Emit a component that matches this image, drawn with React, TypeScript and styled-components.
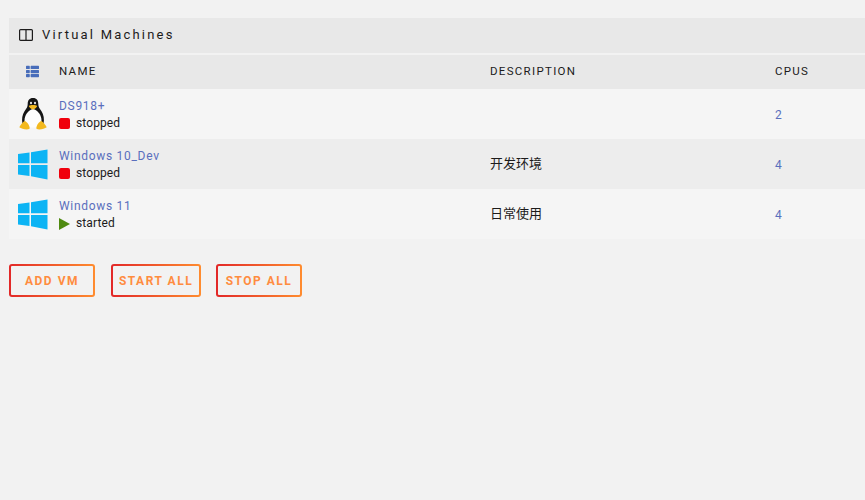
import React from "react";
import styled, { createGlobalStyle } from "styled-components";
import { FaThList } from "react-icons/fa";

const GlobalStyle = createGlobalStyle`
    html, body {
        margin: 0;
        background: #f2f2f2;
        font-family: Roboto, "Noto Sans CJK SC", sans-serif;
        color: #1c1b1b;
    }
`;

const Page = styled.div`
    padding: 18px 0 0 9px;
    height: 482px;
    overflow: hidden;
`;

const TitleBar = styled.div`
    height: 35px;
    display: flex;
    align-items: center;
    gap: 9px;
    padding: 0 0 2px 10px;
    box-sizing: border-box;
    background: #e8e8e8;
    font-size: 13px;
    letter-spacing: 2.2px;
`;

const Row = styled.div<{ $shade: "head" | "light" | "dark" }>`
    display: grid;
    grid-template-columns: 50px 431px 285px 1fr;
    align-items: center;
    height: ${(p) => (p.$shade === "head" ? 34 : 50)}px;
    background: ${(p) => (p.$shade === "head" ? "#e8e8e8" : p.$shade === "dark" ? "#ededed" : "#f5f5f5")};
`;

const HeadRow = styled(Row)`
    margin-top: 2px;
    padding-bottom: 2px;
    box-sizing: border-box;
    font-size: 11.500px;
    letter-spacing: 1.3px;
`;

const IconCell = styled.div`
    display: flex;
    justify-content: center;
    padding-right: 3px;
`;

const VmCell = styled.div`
    padding-top: 2px;
`;

const VmName = styled.div`
    font-size: 12px;
    letter-spacing: 0.7px;
    line-height: 17px;
    color: #5a6fbd;
`;

const State = styled.div`
    display: flex;
    align-items: center;
    gap: 6px;
    font-size: 12px;
    letter-spacing: 0.1px;
    line-height: 17px;
`;

const StoppedDot = styled.span`
    width: 11px;
    height: 11px;
    border-radius: 2px;
    background: #f0000c;
`;

const StartedMark = styled.span`
    width: 0;
    height: 0;
    border-style: solid;
    border-width: 6px 0 6px 11px;
    border-color: transparent transparent transparent #4f8a10;
`;

const Description = styled.div`
    font-size: 13px;
    margin-top: -4px;
`;

const Cpus = styled.div`
    padding-top: 2px;
    font-size: 12px;
    color: #5a6fbd;
`;

const Actions = styled.div`
    display: flex;
    margin-top: 25px;
`;

const ActionButton = styled.button<{ $width: number; $gap: number }>`
    width: ${(p) => p.$width}px;
    height: 33px;
    margin-right: ${(p) => p.$gap}px;
    padding: 0;
    border: 2px solid transparent;
    border-radius: 3px;
    background:
        linear-gradient(#f2f2f2, #f2f2f2) padding-box,
        linear-gradient(90deg, #e22828, #ff8c2f) border-box;
    color: #ff8c3f;
    font-family: Roboto, sans-serif;
    font-size: 12px;
    font-weight: 700;
    letter-spacing: 1.5px;
`;

const PanelIcon = () => (
    <svg width="14" height="12" viewBox="0 0 14 12" fill="none" stroke="#1c1b1b" strokeWidth="1.2">
        <rect x="0.6" y="0.6" width="12.8" height="10.8" rx="1" />
        <path d="M7 1v10" />
    </svg>
);

const WindowsLogo = () => (
    <svg width="30" height="31" viewBox="0 0 30 31" fill="#0cb4f4">
        <path d="M0 5l11.500-1.600v10.900H0z" />
        <path d="M13 3.200L29.500.5v13.800H13z" />
        <path d="M0 16h11.500v11L0 25.500z" />
        <path d="M13 16h16.500v14.500L13 27.300z" />
    </svg>
);

const Penguin = () => (
    <svg width="28" height="32" viewBox="0 0 28 32">
        <path d="M14 0c-3.800 0-5.300 2.600-5.300 6 0 3-1.200 4.300-3.200 7.300C3.300 16.800 2.500 21 3.500 26h21c1-5 .2-9.200-2-12.700-2-3-3.200-4.300-3.200-7.300 0-3.400-1.500-6-5.300-6z" fill="#151515" />
        <path d="M14 11c-4.800.8-8.500 6.500-8.500 11.500 0 4.500 3.500 7 8.500 7s8.500-2.500 8.500-7c0-5-3.700-10.700-8.500-11.500z" fill="#fdfdfd" />
        <ellipse cx="12" cy="5" rx="1" ry="1.300" fill="#eee" />
        <ellipse cx="16" cy="5" rx="1" ry="1.300" fill="#eee" />
        <path d="M10 7.800c1.500-1 6.500-1 8 0 .6.900-2.400 3.600-4 3.600s-4.600-2.700-4-3.600z" fill="#f3b91f" />
        <path d="M5.500 23C3.500 24.500 1 27.500.3 29.300c2 1.700 8 3.200 10.200 1.500.8-2.200-2.200-7.300-5-7.800z" fill="#f3b91f" />
        <path d="M22.500 23c2 1.500 4.500 4.500 5.200 6.300-2 1.700-8 3.200-10.200 1.500-.8-2.200 2.200-7.300 5-7.800z" fill="#f3b91f" />
    </svg>
);

type Vm = {
    name: string;
    running: boolean;
    description: string;
    cpus: number;
    os: "linux" | "windows";
};

const vms: Vm[] = [
    { name: "DS918+", running: false, description: "", cpus: 2, os: "linux" },
    { name: "Windows 10_Dev", running: false, description: "开发环境", cpus: 4, os: "windows" },
    { name: "Windows 11", running: true, description: "日常使用", cpus: 4, os: "windows" },
];

const App: React.FC = () => {
    return (
        <Page>
            <GlobalStyle />
            <TitleBar>
                <PanelIcon />
                Virtual Machines
            </TitleBar>
            <HeadRow $shade="head">
                <IconCell>
                    <FaThList size={13} color="#486dba" />
                </IconCell>
                <div>NAME</div>
                <div>DESCRIPTION</div>
                <div>CPUS</div>
            </HeadRow>
            {vms.map((vm, i) => (
                <Row key={vm.name} $shade={i % 2 ? "dark" : "light"}>
                    <IconCell>{vm.os === "linux" ? <Penguin /> : <WindowsLogo />}</IconCell>
                    <VmCell>
                        <VmName>{vm.name}</VmName>
                        <State>
                            {vm.running ? <StartedMark /> : <StoppedDot />}
                            {vm.running ? "started" : "stopped"}
                        </State>
                    </VmCell>
                    <Description>{vm.description}</Description>
                    <Cpus>{vm.cpus}</Cpus>
                </Row>
            ))}
            <Actions>
                <ActionButton $width={86} $gap={16}>ADD VM</ActionButton>
                <ActionButton $width={90} $gap={15}>START ALL</ActionButton>
                <ActionButton $width={86} $gap={0}>STOP ALL</ActionButton>
            </Actions>
        </Page>
    );
};

export default App;
